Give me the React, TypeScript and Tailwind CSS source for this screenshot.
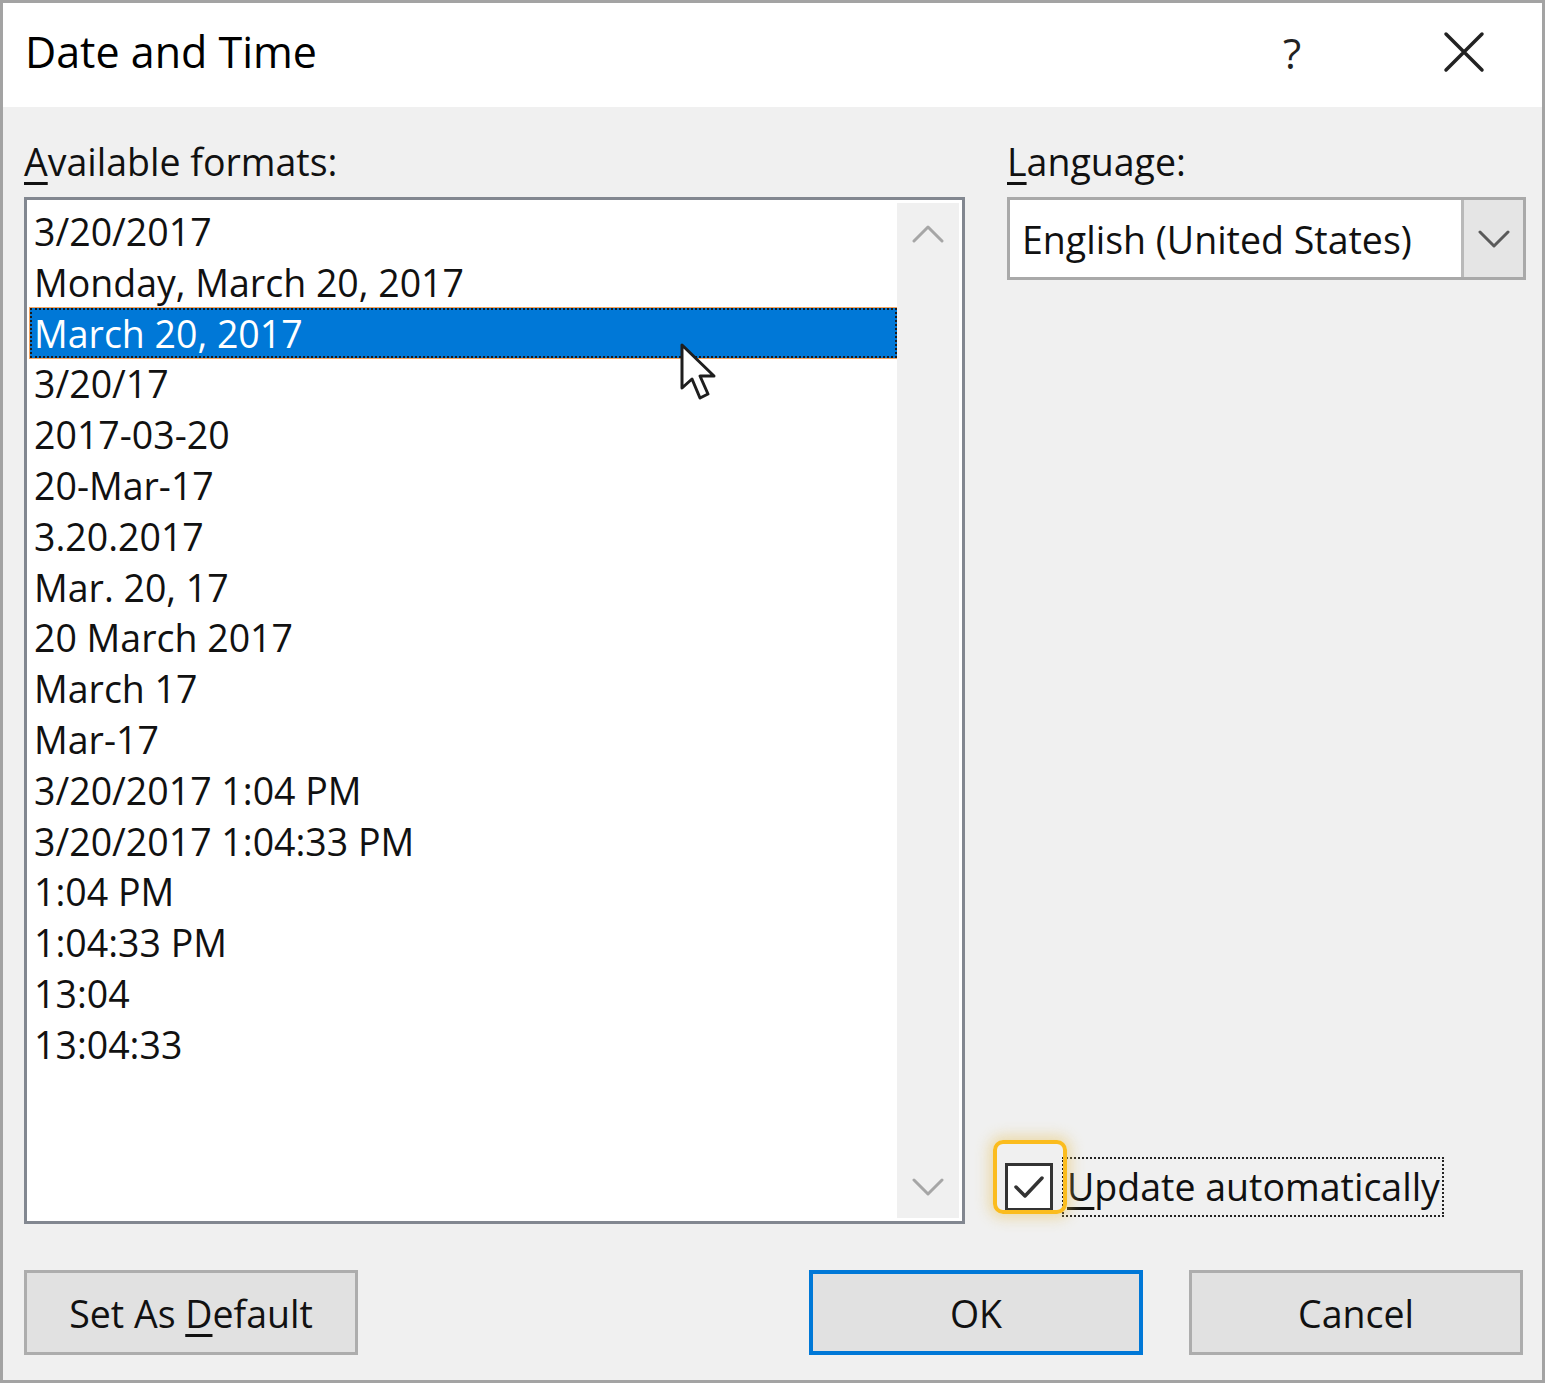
import React from "react";

const formats = [
  "3/20/2017",
  "Monday, March 20, 2017",
  "March 20, 2017",
  "3/20/17",
  "2017-03-20",
  "20-Mar-17",
  "3.20.2017",
  "Mar. 20, 17",
  "20 March 2017",
  "March 17",
  "Mar-17",
  "3/20/2017 1:04 PM",
  "3/20/2017 1:04:33 PM",
  "1:04 PM",
  "1:04:33 PM",
  "13:04",
  "13:04:33",
];

const selected = 2;

function Chevron({ up = false, color }: { up?: boolean; color: string }) {
  return (
    <svg width="32" height="18" viewBox="0 0 32 18" fill="none">
      <path
        d={up ? "M2 16 L16 2 L30 16" : "M2 2 L16 16 L30 2"}
        stroke={color}
        strokeWidth="3"
        strokeLinejoin="round"
        strokeLinecap="round"
      />
    </svg>
  );
}

function Cursor() {
  return (
    <svg
      className="absolute left-[676px] top-[339px]"
      width="40"
      height="62"
      viewBox="0 0 40 62"
      fill="none"
    >
      <path
        d="M3 3 L3 46 L13 37 L21 56 L29 52 L21 34 L35 34 Z"
        fill="white"
        stroke="#1e1e1e"
        strokeWidth="3"
        strokeLinejoin="round"
      />
    </svg>
  );
}

function Button({ children, primary = false }: { children: React.ReactNode; primary?: boolean }) {
  return (
    <div
      className={`w-[334px] h-[85px] shrink-0 flex items-center justify-center pt-[4px] bg-[#e1e1e1] text-[37.5px] ${
        primary ? "border-[4px] border-[#0078d7]" : "border-[3px] border-[#adadad]"
      }`}
    >
      {children}
    </div>
  );
}

export default function App() {
  return (
    <div className="relative w-[1545px] h-[1383px] border-[3px] border-[#a3a3a3] bg-[#f0f0f0] flex flex-col font-['Open_Sans',sans-serif] text-[#111]">
      {/* title bar */}
      <div className="h-[104px] bg-white flex items-center pl-[22px] pb-[6px] text-[43px]">
        <div className="flex-1 text-black">Date and Time</div>
        <div className="w-[40px] text-center mr-[130px] text-[42px] text-[#222]">?</div>
        <svg width="44" height="44" viewBox="0 0 44 44" className="mr-[56px]">
          <path d="M4 4 L40 40 M40 4 L4 40" stroke="#222" strokeWidth="3.5" strokeLinecap="round" />
        </svg>
      </div>

      <div className="flex-1 flex flex-col pl-[21px] pr-[16px] pt-[33px] text-[37.5px]">
        <div className="flex gap-[42px]">
          {/* left column */}
          <div className="w-[941px] shrink-0 flex flex-col">
            <div className="leading-[44px]">
              <span className="underline underline-offset-[6px] decoration-[3px]">A</span>vailable formats:
            </div>
            <div className="mt-[13px] h-[1027px] border-[3px] border-[#828790] bg-white p-[3px] flex">
              <div className="flex-1 pt-[3px]">
                {formats.map((f, i) =>
                  i === selected ? (
                    <div
                      key={f}
                      className="h-[50.8px] leading-[48px] pl-[2px] bg-[#0078d7] text-white border-[2px] border-dotted border-[#1a1a1a] shadow-[0_0_0_1px_#f4a460]"
                    >
                      {f}
                    </div>
                  ) : (
                    <div key={f} className="h-[50.8px] leading-[52px] pl-[4px]">
                      {f}
                    </div>
                  )
                )}
              </div>
              <div className="w-[62px] bg-[#f0f0f0] flex flex-col items-center justify-between pt-[22px] pb-[22px]">
                <Chevron up color="#a6a6a6" />
                <Chevron color="#a6a6a6" />
              </div>
            </div>
          </div>

          {/* right column */}
          <div className="w-[519px] shrink-0 flex flex-col">
            <div className="leading-[44px]">
              <span className="underline underline-offset-[6px] decoration-[3px]">L</span>anguage:
            </div>
            <div className="mt-[13px] h-[83px] border-[3px] border-[#a9a9a9] bg-white flex">
              <div className="flex-1 flex items-center pl-[12px] pt-[3px]">English (United States)</div>
              <div className="w-[62px] bg-[#e5e5e5] border-l-[3px] border-[#b9b9b9] flex items-center justify-center">
                <Chevron color="#5a5a5a" />
              </div>
            </div>
            <div className="flex-1" />
            <div className="flex items-center mb-[7px] h-[60px] -ml-[2px]">
              <div className="relative w-[48px] h-[48px] border-[3px] border-[#333] bg-white flex items-center justify-center">
                <svg width="34" height="28" viewBox="0 0 34 28" fill="none">
                  <path d="M4 14 L13 23 L30 5" stroke="#333" strokeWidth="3.5" strokeLinecap="round" strokeLinejoin="round" />
                </svg>
                <div className="absolute left-[-15px] top-[-26px] w-[74px] h-[74px] rounded-[10px] border-[4px] border-[#fbbc1e] shadow-[0_0_14px_4px_rgba(230,190,80,0.45)]" />
              </div>
              <div className="ml-[9px] h-[60px] pl-[3px] pr-[2px] flex items-center border-[2px] border-dotted border-[#222]">
                <span className="underline underline-offset-[6px] decoration-[3px]">U</span>pdate automatically
              </div>
            </div>
          </div>
        </div>

        {/* buttons */}
        <div className="mt-[46px] mr-[3px] flex">
          <Button>
            Set As&nbsp;<span className="underline underline-offset-[6px] decoration-[3px]">D</span>efault
          </Button>
          <div className="flex-1" />
          <Button primary>OK</Button>
          <div className="w-[46px] shrink-0" />
          <Button>Cancel</Button>
        </div>
      </div>
      <Cursor />
    </div>
  );
}
